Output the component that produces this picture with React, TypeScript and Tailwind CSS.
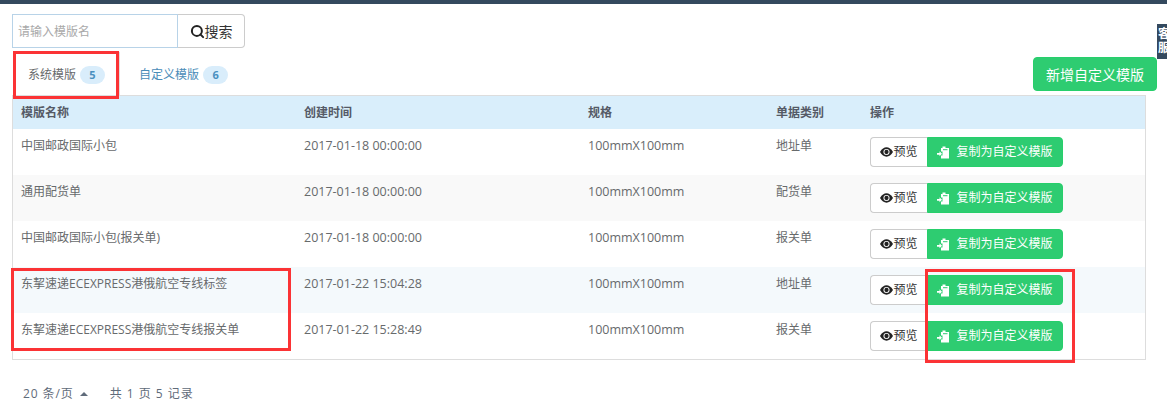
import { Search } from 'lucide-react'

interface TemplateRow {
  name: string
  createdAt: string
  type: string
  rowClass: string
}

const rows: TemplateRow[] = [
  { name: '中国邮政国际小包', createdAt: '2017-01-18 00:00:00', type: '地址单', rowClass: 'bg-white' },
  { name: '通用配货单', createdAt: '2017-01-18 00:00:00', type: '配货单', rowClass: 'bg-[#f9f9f9]' },
  { name: '中国邮政国际小包(报关单)', createdAt: '2017-01-18 00:00:00', type: '报关单', rowClass: 'bg-white' },
  { name: '东挈速递ECEXPRESS港俄航空专线标签', createdAt: '2017-01-22 15:04:28', type: '地址单', rowClass: 'bg-[#f4f9fc]' },
  { name: '东挈速递ECEXPRESS港俄航空专线报关单', createdAt: '2017-01-22 15:28:49', type: '报关单', rowClass: 'bg-white' },
]

function RedBox({ className }: { className: string }) {
  return <div className={`absolute border-[3px] border-[#fb3335] pointer-events-none ${className}`} />
}

function EyeIcon() {
  return (
    <svg width="13" height="10" viewBox="0 0 14 10" className="shrink-0">
      <path d="M0 5C2 1.600 4.400 0 7 0s5 1.600 7 5c-2 3.400-4.400 5-7 5S2 8.400 0 5z" fill="#222" />
      <circle cx="7" cy="5" r="3.300" fill="#fff" />
      <circle cx="7" cy="5" r="2.300" fill="#222" />
    </svg>
  )
}

function CopyIcon() {
  return (
    <svg width="13" height="13" viewBox="0 0 13 13" className="shrink-0">
      <path d="M4 2h1.500V0.500h3V2H12v10.500H4V9.500h1.500V5.500H4z" fill="#fff" />
      <path d="M6 3.200h4.500v1H6z" fill="#2ecc71" />
      <path d="M0 7h2.500V5.300L5 7.800l-2.500 2.500V8.700H0z" fill="#fff" />
    </svg>
  )
}

export default function App() {
  return (
    <div
      className="relative h-[408px] w-[1167px] overflow-hidden bg-white text-[12px] text-[#676a6c]"
      style={{ fontFamily: '"Open Sans", "Noto Sans CJK SC", sans-serif' }}
    >
      <div className="h-1 bg-[#34495e]" />

      <div className="flex ml-3 mt-2.5 h-[34px] w-[233px]">
        <input
          placeholder="请输入模版名"
          className="w-[166px] h-full border border-[#b8d3e8] px-[5px] text-[12px] outline-none placeholder:text-[#a9a9a9]"
        />
        <button className="flex flex-1 items-center justify-center border border-l-0 border-[#ccc] rounded-r text-[14px] text-[#333]">
          <Search size={15} strokeWidth={3.2} className="text-[#222]" />
          搜索
        </button>
      </div>

      <div className="flex items-start justify-between ml-3 mr-[10px] mt-1 h-[43px]">
        <div className="flex h-full">
          <div className="flex items-center gap-1 h-full pl-4 pr-[14px] border-r border-[#e0e0e0] pt-[3px]">
            <span className="text-[#676a6c]">系统模版</span>
            <span className="flex items-center justify-center w-[25px] h-[18px] rounded-full bg-[#d9edfb] text-[11px] font-bold text-[#4a90bf]">5</span>
          </div>
          <div className="flex items-center gap-1 h-full pl-[19px] pt-[3px]">
            <span className="text-[#4a8cb8]">自定义模版</span>
            <span className="flex items-center justify-center w-[25px] h-[18px] rounded-full bg-[#d9edfb] text-[11px] font-bold text-[#4a90bf]">6</span>
          </div>
        </div>
        <button className="mt-[5px] w-[124px] h-[34px] rounded bg-[#2ecc71] border border-[#27cf6b] text-[14px] text-white">
          新增自定义模版
        </button>
      </div>

      <div className="ml-3 w-[1134px] border border-[#dddddd]">
        <div className="grid grid-cols-[283px_284px_188px_94px_1fr] h-[33px] items-center bg-[#d9eefb] font-bold text-[#555a66] pt-px">
          <div className="pl-2">模版名称</div>
          <div className="pl-2">创建时间</div>
          <div className="pl-2">规格</div>
          <div className="pl-2">单据类别</div>
          <div className="pl-2">操作</div>
        </div>
        {rows.map((row) => (
          <div key={row.name} className={`grid grid-cols-[283px_284px_188px_94px_1fr] h-[46px] ${row.rowClass}`}>
            <div className="pl-2 pt-2">{row.name}</div>
            <div className="pl-2 pt-2 text-[12.500px]">{row.createdAt}</div>
            <div className="pl-2 pt-2 text-[12.500px]">100mmX100mm</div>
            <div className="pl-2 pt-2">{row.type}</div>
            <div className="flex pl-2 pt-2">
              <button className="flex items-center justify-center w-[57px] h-[30px] border border-[#ccc] border-r-0 rounded-l bg-white text-[#333]">
                <EyeIcon />
                预览
              </button>
              <button className="flex items-center justify-center gap-[6px] w-[136px] h-[30px] border border-[#27cf6b] rounded-r bg-[#2ecc71] text-white">
                <CopyIcon />
                复制为自定义模版
              </button>
            </div>
          </div>
        ))}
      </div>

      <div className="flex items-center ml-[23px] mt-[25px] text-[#5f6b7a]">
        <span className="whitespace-pre tracking-[0.9px]">20 条/页</span>
        <span className="ml-[6px] mr-[22px] w-0 h-0 border-x-[4px] border-b-[4px] border-x-transparent border-b-[#5f6b7a]" />
        <span className="whitespace-pre tracking-[1px]">共 1 页 5 记录</span>
      </div>

      <div className="absolute right-0 top-6 w-[10px] h-[35px] overflow-hidden bg-[#34495e] text-[12px] leading-[14px] font-bold text-white pl-px pt-[3px]">
        客服
      </div>

      <RedBox className="left-[13px] top-[51px] w-[106px] h-[48px]" />
      <RedBox className="left-[11px] top-[268px] w-[280px] h-[83px]" />
      <RedBox className="left-[925px] top-[269px] w-[150px] h-[94px]" />
    </div>
  )
}
